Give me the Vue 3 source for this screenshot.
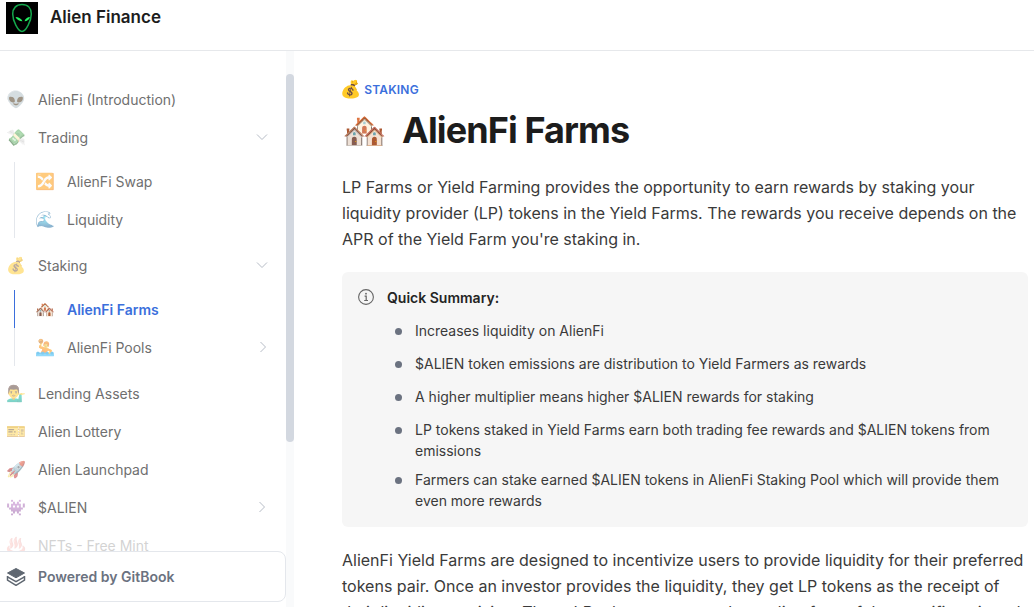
<template>
  <div class="page">
    <header class="topbar">
      <div class="logo">
        <svg viewBox="0 0 32 32" width="32" height="32">
          <rect width="32" height="32" fill="#000" />
          <path d="M16 2.500c-5.800 0-9.300 3.800-9.300 9.500 0 7 5.500 17.500 9.300 17.500s9.300-10.500 9.300-17.500c0-5.700-3.500-9.500-9.300-9.500z" fill="none" stroke="#14a84c" stroke-width="1.500" />
          <path d="M9.500 15c3 .2 6 1.500 7 4.200-3.200 0-6-1.500-7-4.200zM24 15c-2.500.2-4.800 1.500-5.500 4.200 2.700 0 5-1.500 5.500-4.200z" fill="#22f060" />
        </svg>
      </div>
      <span class="brand">Alien Finance</span>
    </header>

    <div class="body-row">
      <aside class="sidebar">
        <nav class="nav">
          <div v-for="item in navItems" :key="item.label" class="group" :class="{ faded: item.faded }">
            <div class="nav-item">
              <span class="emoji">{{ item.icon }}</span>
              <span class="label">{{ item.label }}</span>
              <svg v-if="item.arrow" class="chev" :class="item.arrow" viewBox="0 0 12 12" width="12" height="12">
                <path d="M1 3.500l5 5 5-5" fill="none" stroke="#b6bcc6" stroke-width="1" />
              </svg>
            </div>
            <div v-if="item.children" class="sub">
              <div
                v-for="child in item.children"
                :key="child.label"
                class="nav-item sub-item"
                :class="{ active: child.active }"
              >
                <span class="emoji">{{ child.icon }}</span>
                <span class="label">{{ child.label }}</span>
                <svg v-if="child.arrow" class="chev" :class="child.arrow" viewBox="0 0 12 12" width="12" height="12">
                  <path d="M1 3.500l5 5 5-5" fill="none" stroke="#b6bcc6" stroke-width="1" />
                </svg>
              </div>
            </div>
          </div>
        </nav>
        <div class="scroll-thumb"></div>
        <div class="powered">
          <svg viewBox="0 0 20 20" width="20" height="20">
            <path d="M10 1.500L18.500 6 10 10.800 1.500 6z" fill="#5f6771" stroke="#5f6771" stroke-width="1" stroke-linejoin="round" />
            <path d="M1.500 9v4.200L10 18.300l8.500-5.100V9" fill="none" stroke="#5f6771" stroke-width="1.500" stroke-linejoin="round" />
            <path d="M1.500 9.800L10 14.700l8.500-4.900" fill="none" stroke="#5f6771" stroke-width="1.500" />
          </svg>
          <span>Powered by GitBook</span>
        </div>
      </aside>

      <main class="content">
        <div class="crumb"><span class="crumb-icon">💰</span>STAKING</div>
        <h1 class="title"><span class="title-icon">🏘️</span>AlienFi Farms</h1>
        <p class="para">
          LP Farms or Yield Farming provides the opportunity to earn rewards by staking your
          liquidity provider (LP) tokens in the Yield Farms. The rewards you receive depends on the
          APR of the Yield Farm you're staking in.
        </p>
        <div class="hint">
          <svg class="hint-icon" viewBox="0 0 16 16" width="16" height="16">
            <circle cx="8" cy="8" r="7.400" fill="none" stroke="#666" stroke-width="1.100" />
            <path d="M6.600 7.200H8.200V11.500M6.200 11.500H10" fill="none" stroke="#666" stroke-width="1.200" />
            <circle cx="8" cy="4.700" r="0.900" fill="#666" />
          </svg>
          <div class="hint-body">
            <div class="hint-title">Quick Summary:</div>
            <ul class="hint-list">
              <li v-for="line in summary" :key="line">{{ line }}</li>
            </ul>
          </div>
        </div>
        <p class="para after">
          AlienFi Yield Farms are designed to incentivize users to provide liquidity for their preferred
          tokens pair. Once an investor provides the liquidity, they get LP tokens as the receipt of
          their liquidity provision. These LP tokens can earn the trading fees of the specific pair and
        </p>
      </main>
    </div>
  </div>
</template>

<script setup>
const navItems = [
  { icon: '👽', label: 'AlienFi (Introduction)' },
  {
    icon: '💸',
    label: 'Trading',
    arrow: 'down',
    children: [
      { icon: '🔀', label: 'AlienFi Swap' },
      { icon: '🌊', label: 'Liquidity' },
    ],
  },
  {
    icon: '💰',
    label: 'Staking',
    arrow: 'down',
    children: [
      { icon: '🏘️', label: 'AlienFi Farms', active: true },
      { icon: '🤽', label: 'AlienFi Pools', arrow: 'right' },
    ],
  },
  { icon: '💁‍♂️', label: 'Lending Assets' },
  { icon: '🎫', label: 'Alien Lottery' },
  { icon: '🚀', label: 'Alien Launchpad' },
  { icon: '👾', label: '$ALIEN', arrow: 'right' },
  { icon: '♨️', label: 'NFTs - Free Mint', faded: true },
]

const summary = [
  'Increases liquidity on AlienFi',
  '$ALIEN token emissions are distribution to Yield Farmers as rewards',
  'A higher multiplier means higher $ALIEN rewards for staking',
  'LP tokens staked in Yield Farms earn both trading fee rewards and $ALIEN tokens from emissions',
  'Farmers can stake earned $ALIEN tokens in AlienFi Staking Pool which will provide them even more rewards',
]
</script>

<style>
html,
body {
  margin: 0;
  height: 100%;
  overflow: hidden;
  background: #fff;
}
</style>

<style scoped>
.page {
  width: 1034px;
  height: 607px;
  overflow: hidden;
  font-family: Inter, "Noto Sans", sans-serif;
  color: #242424;
  background: #fff;
}

.topbar {
  height: 50px;
  display: flex;
  align-items: flex-start;
  border-bottom: 1px solid #e6e8eb;
  box-sizing: content-box;
}

.logo {
  width: 32px;
  height: 32px;
  margin: 2px 0 0 6px;
}

.logo svg {
  display: block;
}

.brand {
  margin: 5px 0 0 12px;
  font-size: 17px;
  line-height: 24px;
  font-weight: 600;
  color: #1c1c1c;
}

.body-row {
  display: flex;
  height: 556px;
}

.sidebar {
  position: relative;
  width: 294px;
  flex: none;
  height: 556px;
  overflow: hidden;
  background: linear-gradient(to right, #fff 286px, #f9fafb 286px);
}

.nav {
  padding-top: 29px;
}

.nav-item {
  display: flex;
  align-items: center;
  height: 38px;
  padding-left: 6px;
  width: 268px;
  box-sizing: border-box;
  font-size: 14px;
  color: #6f6f6f;
}

.emoji {
  width: 32px;
  flex: none;
  font-size: 16px;
  opacity: 0.5;
}

.label {
  flex: 1;
}

.chev {
  flex: none;
}

.chev.right {
  transform: rotate(-90deg);
}

.sub {
  margin: 6px 0 8px 14px;
  border-left: 1px solid #e4e7ec;
}

.sub-item {
  padding-left: 20px;
  width: 254px;
}

.sub-item.active {
  color: #3b6fdc;
  font-weight: 600;
  position: relative;
}

.sub-item.active .emoji {
  opacity: 1;
}

.sub-item.active::before {
  content: "";
  position: absolute;
  left: -1px;
  top: 0;
  bottom: 0;
  width: 1px;
  background: #3b6fdc;
}

.faded {
  opacity: 0.3;
}

.scroll-thumb {
  position: absolute;
  left: 286px;
  top: 23px;
  width: 8px;
  height: 368px;
  border-radius: 4px;
  background: #d3d8e0;
}

.powered {
  position: absolute;
  left: -10px;
  top: 500px;
  width: 296px;
  height: 51px;
  box-sizing: border-box;
  padding-left: 15px;
  display: flex;
  align-items: center;
  gap: 12px;
  background: #fff;
  border: 1px solid #e4e7ec;
  border-radius: 8px;
  font-size: 14px;
  font-weight: 600;
  color: #6b7280;
}

.content {
  flex: 1;
  padding: 29px 6px 0 48px;
}

.crumb {
  display: flex;
  align-items: center;
  height: 18px;
  font-size: 12px;
  font-weight: 600;
  letter-spacing: 0.2px;
  color: #3b6fdc;
}

.crumb-icon {
  font-size: 17px;
  margin-left: -2px;
  margin-right: 3px;
}

.title {
  display: flex;
  align-items: center;
  margin: 8px 0 0;
  height: 48px;
  font-size: 36px;
  font-weight: 700;
  letter-spacing: -0.9px;
  color: #1c1c1c;
}

.title-icon {
  width: 60px;
  font-size: 36px;
  letter-spacing: 0;
}

.para {
  margin: 20px 0 0;
  font-size: 16px;
  line-height: 26px;
  color: #3a3a3a;
}

.hint {
  display: flex;
  margin-top: 20px;
  padding: 16px;
  background: #f6f6f6;
  border-radius: 6px;
}

.hint-icon {
  flex: none;
  margin-right: 13px;
  margin-top: 1px;
}

.hint-title {
  font-size: 14px;
  line-height: 20px;
  font-weight: 600;
  color: #242424;
}

.hint-list {
  margin: 0;
  padding: 12px 0 0 0;
  list-style: none;
}

.hint-list li {
  position: relative;
  padding-left: 28px;
  font-size: 14px;
  line-height: 21px;
  margin-bottom: 12px;
  color: #3a3a3a;
}

.hint-list li:nth-child(4) {
  margin-bottom: 8px;
}

.hint-list li:last-child {
  margin-bottom: 0;
}

.hint-list li::before {
  content: "";
  position: absolute;
  left: 8px;
  top: 8px;
  width: 7px;
  height: 7px;
  border-radius: 50%;
  background: #6b7280;
}

.after {
  margin-top: 20px;
}
</style>
